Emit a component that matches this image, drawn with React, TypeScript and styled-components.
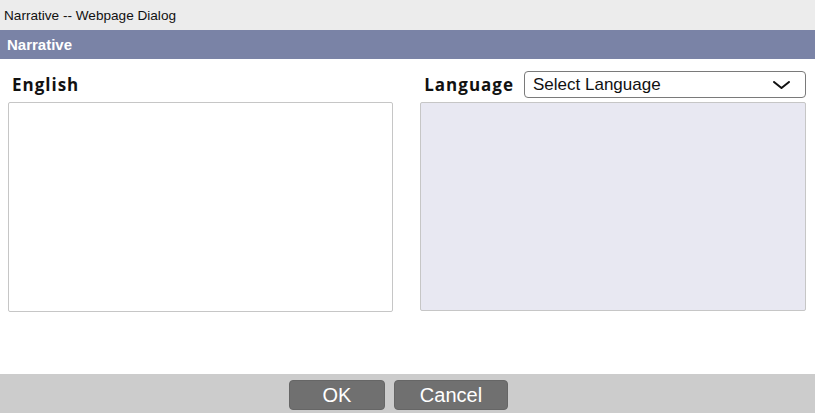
import React from 'react';
import styled, { createGlobalStyle } from 'styled-components';

const GlobalStyle = createGlobalStyle({
  'html, body': {
    margin: 0,
    padding: 0,
    background: '#ffffff',
  },
  body: {
    fontFamily: '"Liberation Sans", Arial, sans-serif',
  },
});

const Dialog = styled.div({
  display: 'flex',
  flexDirection: 'column',
  width: '815px',
  height: '413px',
  overflow: 'hidden',
});

const TitleBar = styled.div({
  height: '30px',
  display: 'flex',
  alignItems: 'center',
  paddingLeft: '4px',
  background: '#ececec',
  color: '#111111',
  fontSize: '13.6px',
});

const Header = styled.div({
  height: '29px',
  display: 'flex',
  alignItems: 'center',
  paddingLeft: '7px',
  background: '#7a83a6',
  color: '#ffffff',
  fontSize: '15px',
  fontWeight: 700,
});

const Body = styled.div({
  flex: 1,
  display: 'grid',
  gridTemplateColumns: '385px 386px',
  columnGap: '27px',
  padding: '12px 9px 0 8px',
  alignContent: 'start',
});

const Column = styled.div({
  display: 'flex',
  flexDirection: 'column',
  gap: '4px',
});

const LabelRow = styled.div<{ $align?: string }>((p) => ({
  height: '27px',
  display: 'flex',
  alignItems: 'center',
  justifyContent: p.$align || 'flex-start',
  gap: '10px',
}));

const Label = styled.span<{ $indent?: number }>((p) => ({
  paddingLeft: `${p.$indent || 0}px`,
  fontFamily: '"Open Sans", "DejaVu Sans", sans-serif',
  fontWeight: 700,
  fontSize: '17px',
  letterSpacing: '1px',
  color: '#111111',
}));

const Select = styled.div({
  boxSizing: 'border-box',
  width: '282px',
  height: '27px',
  display: 'flex',
  alignItems: 'center',
  justifyContent: 'space-between',
  padding: '0 15px 0 8px',
  border: '1px solid #7a7a7a',
  borderRadius: '4px',
  background: '#ffffff',
  fontSize: '17px',
  color: '#111111',
});

const TextBox = styled.div<{ $readonly?: boolean }>((p) => ({
  boxSizing: 'border-box',
  height: p.$readonly ? '209px' : '210px',
  border: '1px solid #c6c6c6',
  borderRadius: '2px',
  background: p.$readonly ? '#e8e8f2' : '#ffffff',
}));

const Footer = styled.div({
  height: '39px',
  display: 'flex',
  alignItems: 'flex-start',
  justifyContent: 'center',
  gap: '9px',
  paddingTop: '6px',
  paddingRight: '18px',
  boxSizing: 'border-box',
  background: '#cccccc',
});

const Button = styled.button<{ $width: number }>((p) => ({
  width: `${p.$width}px`,
  height: '30px',
  padding: 0,
  border: '1px solid #666666',
  borderRadius: '4px',
  background: '#707070',
  color: '#ffffff',
  fontFamily: '"Liberation Sans", Arial, sans-serif',
  fontSize: '20px',
  lineHeight: '28px',
}));

const Chevron = () => (
  <svg width="17" height="8" viewBox="0 0 17 8" fill="none">
    <path d="M1 1l7.5 6L16 1" stroke="#111111" strokeWidth="2" strokeLinecap="round" strokeLinejoin="round" />
  </svg>
);

const App = () => (
  <Dialog>
    <GlobalStyle />
    <TitleBar>Narrative -- Webpage Dialog</TitleBar>
    <Header>Narrative</Header>
    <Body>
      <Column>
        <LabelRow>
          <Label $indent={4}>English</Label>
        </LabelRow>
        <TextBox />
      </Column>
      <Column>
        <LabelRow $align="flex-end">
          <Label>Language</Label>
          <Select>
            <span>Select Language</span>
            <Chevron />
          </Select>
        </LabelRow>
        <TextBox $readonly />
      </Column>
    </Body>
    <Footer>
      <Button $width={96}>OK</Button>
      <Button $width={114}>Cancel</Button>
    </Footer>
  </Dialog>
);

export default App;
